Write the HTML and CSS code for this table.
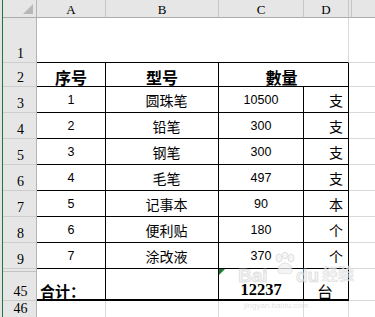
FILE: index.html
```html
<!DOCTYPE html>
<html lang="zh">
<head>
<meta charset="utf-8">
<link rel="stylesheet" href="styles.css">
</head>
<body>
<div class="app">
  <div class="stripe"></div>
  <div class="sheet">
    <div class="ch corner"><span class="tri"></span></div>
    <div class="ch">A</div>
    <div class="ch">B</div>
    <div class="ch">C</div>
    <div class="ch">D</div>
    <div class="ch hidcol"></div>
    <div class="ch last"></div>

    <div class="rh">1</div>
    <div class="c merge4 top"></div>
    <div class="c e"></div>
    <div class="c f"></div>

    <div class="rh">2</div>
    <div class="t hd">序号</div>
    <div class="t hd">型号</div>
    <div class="t hd span2">數量</div>
    <div class="c e"></div>
    <div class="c f"></div>

    <div class="rh">3</div>
    <div class="t num">1</div>
    <div class="t name">圆珠笔</div>
    <div class="t num">10500</div>
    <div class="t unit">支</div>
    <div class="c e"></div>
    <div class="c f"></div>

    <div class="rh">4</div>
    <div class="t num">2</div>
    <div class="t name">铅笔</div>
    <div class="t num">300</div>
    <div class="t unit">支</div>
    <div class="c e"></div>
    <div class="c f"></div>

    <div class="rh">5</div>
    <div class="t num">3</div>
    <div class="t name">钢笔</div>
    <div class="t num">300</div>
    <div class="t unit">支</div>
    <div class="c e"></div>
    <div class="c f"></div>

    <div class="rh">6</div>
    <div class="t num">4</div>
    <div class="t name">毛笔</div>
    <div class="t num">497</div>
    <div class="t unit">支</div>
    <div class="c e"></div>
    <div class="c f"></div>

    <div class="rh">7</div>
    <div class="t num">5</div>
    <div class="t name">记事本</div>
    <div class="t num">90</div>
    <div class="t unit">本</div>
    <div class="c e"></div>
    <div class="c f"></div>

    <div class="rh">8</div>
    <div class="t num">6</div>
    <div class="t name">便利贴</div>
    <div class="t num">180</div>
    <div class="t unit">个</div>
    <div class="c e"></div>
    <div class="c f"></div>

    <div class="rh">9</div>
    <div class="t num">7</div>
    <div class="t name">涂改液</div>
    <div class="t num">370</div>
    <div class="t unit">个</div>
    <div class="c e"></div>
    <div class="c f"></div>

    <div class="rh hidrow">45</div>
    <div class="t tot label">合计：</div>
    <div class="t tot"></div>
    <div class="t tot sum">12237</div>
    <div class="t tot unit2">台</div>
    <div class="c e"></div>
    <div class="c f"></div>

    <div class="rh">46</div>
    <div class="c"></div>
    <div class="c"></div>
    <div class="c"></div>
    <div class="c"></div>
    <div class="c e"></div>
    <div class="c f"></div>

    <div class="watermark" aria-hidden="true">
      <span class="wm-bai">Bai</span>
      <svg class="wm-paw" width="22" height="24" viewBox="0 0 22 24">
        <g fill="#f2f2f2" stroke="#d6d6d6" stroke-width="1">
          <ellipse cx="5" cy="6" rx="3" ry="4"/>
          <ellipse cx="11" cy="3.5" rx="3" ry="3.2"/>
          <ellipse cx="17" cy="6" rx="3" ry="4"/>
          <path d="M4 19 C4 13 8 11 11 11 C14 11 18 13 18 19 C18 22 14 22 11 21 C8 22 4 22 4 19 Z"/>
        </g>
      </svg>
      <span class="wm-du">du</span>
      <span class="wm-jy">经验</span>
      <span class="wm-url">jingyan.baidu.com</span>
    </div>
  </div>
</div>
</body>
</html>
```

FILE: styles.css
```css
* { box-sizing: border-box; }
html, body { margin: 0; padding: 0; background: #fff; }
body { width: 375px; height: 317px; overflow: hidden; }

.app { display: flex; height: 317px; }

.stripe {
  width: 3px;
  flex: none;
  background: linear-gradient(to right, #e4e4e4 0 2px, #217346 2px 3px);
}

.sheet {
  position: relative;
  flex: 1;
  display: grid;
  grid-template-columns: 34px 69px 113px 85px 45px 3px 1fr;
  grid-template-rows: 18px 45px 24px repeat(7, 26px) 32px 17px;
  font-family: "Noto Sans CJK SC", sans-serif;
  color: #000;
}

.ch {
  background: #e6e6e6;
  border-right: 1px solid #c6c6c6;
  border-bottom: 1px solid #ababab;
  font-family: "Liberation Serif", serif;
  font-size: 13px;
  display: flex;
  align-items: center;
  justify-content: center;
  line-height: 1;
  padding-top: 1px;
}
.ch.corner { position: relative; border-right-color: #b5b5b5; }
.ch.last { border-right: none; }
.tri {
  position: absolute;
  right: 3px;
  bottom: 3px;
  width: 0;
  height: 0;
  border-left: 10px solid transparent;
  border-bottom: 10px solid #b8b8b8;
}

.rh {
  background: #e6e6e6;
  border-right: 1px solid #b5b5b5;
  border-bottom: 1px solid #cdcdcd;
  font-family: "Liberation Serif", serif;
  font-size: 14px;
  display: flex;
  align-items: flex-end;
  justify-content: center;
  padding-left: 2px;
  line-height: 16px;
}
.rh.hidrow {
  box-shadow: inset 0 2px 0 #e6e6e6, inset 0 3px 0 #c2c2c2;
}

.c {
  border-right: 1px solid #d9d9d9;
  border-bottom: 1px solid #d9d9d9;
}
.c.e { border-right: none; }
.c.f { border-right: none; }
.merge4 { grid-column: span 4; border-bottom: 1px solid #000; }

.t {
  border-right: 1px solid #000;
  border-bottom: 1px solid #000;
  display: flex;
  align-items: center;
  justify-content: center;
  white-space: nowrap;
}
.span2 { grid-column: span 2; }

.hd {
  font-weight: 700;
  font-size: 16px;
  align-items: flex-end;
  line-height: 18px;
}
.hd.span2 { padding-right: 4px; }

.num {
  font-family: "Liberation Sans", sans-serif;
  font-size: 12.5px;
  padding-top: 1px;
}
.name {
  font-size: 14px;
  padding-left: 9px;
}
.unit {
  font-size: 14px;
  justify-content: flex-end;
  padding-right: 5px;
}

.tot {
  border-bottom: 2px solid #000;
  align-items: flex-end;
}
.label {
  justify-content: flex-start;
  padding-left: 3px;
  font-weight: 700;
  font-size: 15px;
  line-height: 16px;
}
.sum {
  position: relative;
  font-family: "Liberation Serif", serif;
  font-weight: 700;
  font-size: 16.5px;
  line-height: 16px;
  padding-bottom: 1px;
}
.sum::before {
  content: "";
  position: absolute;
  left: 0;
  top: 0;
  width: 0;
  height: 0;
  border-top: 6px solid #1e7b32;
  border-right: 6px solid transparent;
}
.unit2 {
  font-size: 16px;
  line-height: 16px;
  padding-right: 2px;
}

.watermark {
  position: absolute;
  left: 219px;
  top: 250px;
  width: 150px;
  height: 60px;
  pointer-events: none;
}
.wm-bai, .wm-du {
  position: absolute;
  font-family: "Liberation Sans", sans-serif;
  font-weight: 700;
  font-size: 19px;
  line-height: 1;
  color: rgba(240,240,240,0.7);
  -webkit-text-stroke: 1px rgba(205,205,205,0.55);
}
.wm-bai { left: 16px; top: 16px; }
.wm-du { left: 74px; top: 16px; }
.wm-paw { position: absolute; left: 52px; top: 2px; opacity: 0.75; }
.wm-jy {
  position: absolute;
  left: 100px;
  top: 15px;
  font-size: 16px;
  font-weight: 700;
  line-height: 1;
  color: rgba(240,240,240,0.7);
  -webkit-text-stroke: 0.6px rgba(205,205,205,0.55);
}
.wm-url {
  position: absolute;
  left: 22px;
  top: 52px;
  font-family: "Liberation Sans", sans-serif;
  font-size: 8px;
  line-height: 1;
  color: rgba(205,205,205,0.6);
}
```
